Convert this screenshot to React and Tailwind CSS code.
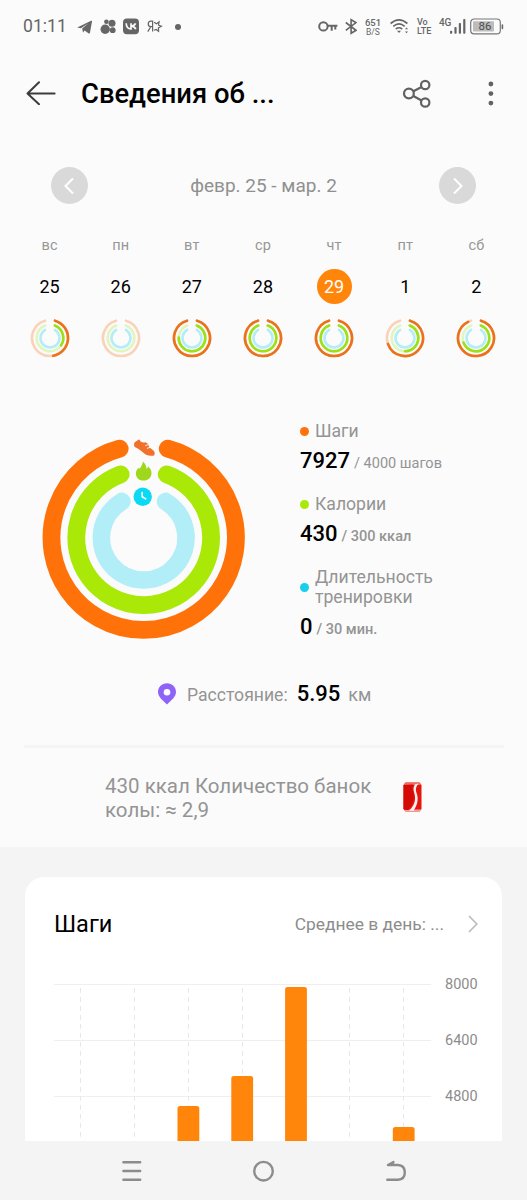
import React from 'react';

const days = [
  { name: 'вс', date: 25, steps: 170, kcal: 124 },
  { name: 'пн', date: 26, steps: 0, kcal: 0 },
  { name: 'вт', date: 27, steps: 360, kcal: 272 },
  { name: 'ср', date: 28, steps: 360, kcal: 360 },
  { name: 'чт', date: 29, steps: 360, kcal: 360, active: true },
  { name: 'пт', date: 1, steps: 251, kcal: 180 },
  { name: 'сб', date: 2, steps: 334, kcal: 250 },
];

const bars = [
  { x: 123.5, top: 122 },
  { x: 177.3, top: 92 },
  { x: 231.1, top: 3 },
  { x: 338.8, top: 143 },
];

// angles go clockwise from 12 o'clock
function point(c, r, deg) {
  const a = ((deg - 90) * Math.PI) / 180;
  return `${(c + r * Math.cos(a)).toFixed(2)} ${(c + r * Math.sin(a)).toFixed(2)}`;
}

function Arc({ c, r, gap, to = 360, color, width }) {
  const end = Math.min(to, 360 - gap);
  if (end <= gap) return null;
  const large = end - gap > 180 ? 1 : 0;
  return (
    <path
      d={`M${point(c, r, gap)}A${r} ${r} 0 ${large} 1 ${point(c, r, end)}`}
      fill="none"
      stroke={color}
      strokeWidth={width}
      strokeLinecap="round"
    />
  );
}

function SmallRings({ steps, kcal }) {
  return (
    <svg className="size-10" viewBox="0 0 40 40">
      <Arc c={20} r={18} gap={16} color="#fad2b9" width={2.6} />
      <Arc c={20} r={13.3} gap={21} color="#e2f5bd" width={2.6} />
      <Arc c={20} r={9.5} gap={31} color="#b3edf8" width={2.5} />
      <Arc c={20} r={18} gap={16} to={steps} color="#ea721c" width={2.6} />
      <Arc c={20} r={13.3} gap={21} to={kcal} color="#9fdf1a" width={2.6} />
    </svg>
  );
}

function BigRings() {
  return (
    <svg className="h-[204px] w-[204px] shrink-0" viewBox="0 0 204 204">
      <Arc c={101.7} r={92.2} gap={15.1} color="#ff720a" width={17.8} />
      <Arc c={101.7} r={67.4} gap={20} color="#aae808" width={17.8} />
      <Arc c={101.7} r={42.3} gap={31} color="#b2eef8" width={17.6} />
      {/* shoe */}
      <path
        d="M92 9.6L92.4 6.6L96.8 3.4Q98 3.4 98.5 5.4Q101 6.8 103.4 6.2L105.6 7.6L107.6 11.6L112 15Q113.4 16.6 112.2 19.4Q108 20.6 103.6 18.6L98.6 14.4Q96 12 92.8 10.9Z"
        fill="#f0712a"
      />
      <path d="M103.2 9.7L106.6 8.5M105 12.4L108.4 11.2" stroke="#fbfbfb" strokeWidth=".9" />
      {/* flame */}
      <path
        d="M101 25.6C103 27.8 104.5 29.6 104.4 32.8C105.6 32.2 105.7 30.9 106.3 30.4C108.3 32.2 109.6 34.4 109.5 37.3C109.4 41.6 106.2 44.6 101.8 44.6C97.3 44.6 94.2 41.9 93.9 37.9C93.7 34.8 95.4 33 97 31.5L97.5 33.1C98.9 31.1 100.4 29.1 101 25.6Z"
        fill="#9ed71b"
      />
      <circle cx="100.7" cy="60.8" r="9.2" fill="#0cd9f4" />
      <path d="M100.2 56.6V60.8L103.8 62.9" fill="none" stroke="#fff" strokeWidth="1.6" strokeLinecap="round" strokeLinejoin="round" />
    </svg>
  );
}

function StatusBar() {
  return (
    <div className="flex h-[54px] items-center pl-[23px] text-[#666]">
      <span className="w-[54px] text-[17.6px] leading-none">01:11</span>
      <svg className="h-5 w-4" viewBox="0 0 16 20" fill="currentColor">
        <path d="M.2 10.4L14.1 3.8Q15.3 3.3 15 4.6L12.9 15.9Q12.5 17 11.4 16.3L7.6 13.5L6 15.6L5.2 11.6L11.4 6.2L3.9 11.2Z" />
      </svg>
      <svg className="ml-[7px] h-5 w-4" viewBox="0 0 16 20" fill="currentColor">
        <circle cx="5.2" cy="12.2" r="4.7" />
        <circle cx="6.4" cy="4.8" r="2.3" />
        <circle cx="12" cy="6.2" r="3.5" />
        <circle cx="12.7" cy="13.2" r="2.9" />
      </svg>
      <svg className="ml-[7px] h-5 w-4" viewBox="0 0 16 20">
        <rect x="0" y="1.6" width="16" height="15.6" rx="4" fill="currentColor" />
        <path d="M3.2 6.3Q3.4 12 8 12V6.3M12.5 6.4Q11.5 8.9 8.4 9.1Q11.5 9.3 12.8 12.1" fill="none" stroke="#fbfbfb" strokeWidth="1.7" />
      </svg>
      <svg className="ml-2 h-5 w-4" viewBox="0 0 16 20" fill="none" stroke="currentColor" strokeWidth="1.2">
        <path d="M5.6 14.6V4.2H4Q1.2 4.3 1.2 7Q1.2 9.6 4 9.6H5.6M3.7 9.7L.8 14.6" />
        <path d="M7.1 5.2L9.4 6.8L12.1 4.9L11.5 8.2L14.4 9.2L11.4 10.9L11.6 14.3L9.1 12.4L6.9 13.3" />
      </svg>
      <span className="ml-3 size-1.5 rounded-full bg-[#666]" />

      <svg className="ml-[137px] h-5 w-5" viewBox="0 0 20 20" fill="none" stroke="currentColor" strokeWidth="2">
        <circle cx="5.4" cy="9.4" r="4.2" />
        <path d="M9.6 8.7H19.4M13.7 9V13.8M17.3 9V12.6" />
      </svg>
      <svg className="ml-[7px] h-5 w-3" viewBox="0 0 12 20" fill="none" stroke="currentColor" strokeWidth="1.6">
        <path d="M.8 5.5L11 13.3L6.1 16.3V2.7L11 5.6L.8 13.4" />
      </svg>
      <div className="ml-[7px] flex w-[18px] flex-col items-center font-medium">
        <span className="text-[9.5px] leading-[10px]">651</span>
        <span className="text-[8.5px] leading-[9px] font-normal">B/S</span>
      </div>
      <svg className="ml-2 h-5 w-5" viewBox="0 0 20 20" fill="none" stroke="currentColor" strokeWidth="1.7">
        <path d="M.6 6.5Q9 -.6 17.4 6.5M3.3 9.3Q9 4.6 14.7 9.3M5.8 12Q9 9.5 12.2 12" />
        <path d="M7 13.7H11L9 16Z" fill="currentColor" stroke="none" />
        <path d="M15 12.2L16.5 10.4L18 12.2ZM15 14.4L16.5 16.2L18 14.4Z" fill="currentColor" stroke="none" />
      </svg>
      <div className="ml-[7px] w-5 font-medium">
        <div className="text-[9px] leading-[9px]">Vo</div>
        <div className="text-[9px] leading-[9px]">LTE</div>
      </div>
      <span className="mb-2 ml-0.5 w-[11px] text-[10px] leading-none font-medium tracking-tight">4G</span>
      <svg className="h-5 w-4" viewBox="0 0 16 20" fill="currentColor">
        <rect x="0" y="13.8" width="2.2" height="3" rx=".8" />
        <rect x="4.4" y="10" width="2.2" height="6.8" rx=".8" />
        <rect x="8.8" y="6" width="2.2" height="10.8" rx=".8" />
        <rect x="13.2" y="2" width="2.2" height="14.8" rx=".8" />
      </svg>
      <svg className="ml-1 h-5 w-[34px]" viewBox="0 0 34 20">
        <rect x=".7" y="2" width="29.6" height="14.8" rx="3.4" fill="none" stroke="#777" strokeWidth="1.2" />
        <rect x="3" y="4.2" width="21" height="10.4" rx="1" fill="#bcbcbc" />
        <rect x="31.6" y="7.2" width="1.6" height="5" rx=".8" fill="#666" />
        <text x="15" y="13.4" textAnchor="middle" fontSize="11.5" fill="#4c4c4c">86</text>
      </svg>
    </div>
  );
}

function Header() {
  return (
    <header className="flex h-[78px] items-center pl-[26px] text-[#626262]">
      <svg className="h-6 w-[30px]" viewBox="0 0 30 24" fill="none" stroke="#3c3c3c" strokeWidth="2" strokeLinecap="round" strokeLinejoin="round">
        <path d="M28.6 12.5H1.5M13 1.2L1.5 12.5L13 23.2" />
      </svg>
      <h1 className="mt-0.5 ml-[25px] w-[321px] text-[27.4px] leading-[30px] font-medium text-black">Сведения об ...</h1>
      <svg className="h-[30px] w-[30px]" viewBox="0 0 30 30" fill="none" stroke="currentColor" strokeWidth="2.2">
        <circle cx="6.9" cy="15.5" r="4.9" />
        <circle cx="23.2" cy="7" r="4.2" />
        <circle cx="23.2" cy="24.5" r="4.2" />
        <path d="M11.4 13.3L19.5 9M11.4 18L19.5 22.5" />
      </svg>
      <svg className="mt-px ml-[54px] h-7 w-2" viewBox="0 0 8 28" fill="currentColor">
        <circle cx="4.9" cy="4" r="2.4" />
        <circle cx="4.9" cy="13.6" r="2.4" />
        <circle cx="4.9" cy="23.1" r="2.4" />
      </svg>
    </header>
  );
}

function RoundArrow({ d }) {
  return (
    <button className="flex size-[37px] items-center justify-center rounded-full bg-[#d9d9d9]">
      <svg className="size-5" viewBox="0 0 20 20" fill="none" stroke="#fff" strokeWidth="2">
        <path d={d} />
      </svg>
    </button>
  );
}

function Week() {
  return (
    <section className="mt-[35px]">
      <div className="flex items-center justify-between pr-[51px] pl-[51px]">
        <RoundArrow d="M13 2.5L5.5 10L13 17.5" />
        <span className="text-[19px] leading-6 text-[#909090]">февр. 25 - мар. 2</span>
        <RoundArrow d="M6 2.5L13.5 10L6 17.5" />
      </div>
      <div className="mt-8 grid grid-cols-7 pr-[15px] pl-[14px]">
        {days.map((d) => (
          <div key={d.date} className="flex flex-col items-center">
            <span className="text-[14.5px] leading-5 tracking-[0.2px] text-[#979797]">{d.name}</span>
            <span
              className={
                d.active
                  ? 'mt-[13px] flex size-[35px] items-center justify-center rounded-full bg-[#ff860a] text-[18px] text-white'
                  : 'mt-[13px] flex size-[35px] items-center justify-center text-[18px] text-black'
              }
            >
              {d.date}
            </span>
            <div className="mt-3.5">
              <SmallRings steps={d.steps} kcal={d.kcal} />
            </div>
          </div>
        ))}
      </div>
    </section>
  );
}

function Metric({ dot, label, value, goal, bold }) {
  return (
    <div>
      <div className="flex items-center">
        <span className={`size-[9px] shrink-0 rounded-full ${dot}`} />
        <span className="ml-1.5 text-[17.6px] leading-5 whitespace-pre-line text-[#949494]">{label}</span>
      </div>
      <div className="mt-1.5 flex items-baseline leading-7">
        <span className="text-[22px] font-medium text-black">{value}</span>
        <span className={`ml-1 text-[14.5px] text-[#949494] ${bold ? 'font-medium' : ''}`}>/ {goal}</span>
      </div>
    </div>
  );
}

function Can() {
  return (
    <svg className="mb-[3px] h-[30px] w-[19px]" viewBox="0 0 19 30">
      <path d="M2.5 .5H16.5L18.5 3V27L16.5 29.5H2.5L.5 27V3Z" fill="#e3170f" />
      <path d="M2 .8H16.8L18 3H1Z" fill="#ef6b62" />
      <path d="M1 27.4H18L16.8 29.4H2.2Z" fill="#f3a39c" />
      <path d="M.5 3L10 2.5Q8.5 7 10.4 11Q12 18 5.6 28H2L.5 27Z" fill="#d40a06" />
      <path d="M12.2 2.2Q9.6 5.4 11 10C13.8 18.4 11 23.5 6.2 28.8H10.6C14.6 23 16 16.5 13.2 10Q12 5.6 15.6 1.6Z" fill="#fff0ed" />
    </svg>
  );
}

function StepsCard() {
  return (
    <section className="h-[294px] bg-[#f4f4f4] pt-[30px] pr-[25px] pl-[25px]">
      <div className="h-[264px] rounded-t-[19px] bg-white">
        <div className="flex h-[94px] items-center pr-[23px] pl-[29px]">
          <h2 className="flex-1 text-[23.5px] leading-7 text-black">Шаги</h2>
          <span className="text-[17.4px] leading-6 text-[#8c8c8c]">Среднее в день: ...</span>
          <svg className="ml-[23px] h-5 w-3" viewBox="0 0 12 20" fill="none" stroke="#bdbdbd" strokeWidth="1.7">
            <path d="M2 2L9.8 10L2 18" />
          </svg>
        </div>
        <div className="flex pl-[29px]">
          <svg className="mt-[13px] h-[157px] w-[378px]" viewBox="0 0 378 157">
            <path d="M0 .5H377M0 56.5H377M0 112.5H377" stroke="#efefef" />
            <path
              d="M26.5 4V158M80.5 4V158M134.5 4V158M188.5 4V158M242.5 4V158M295.5 4V158M349.5 4V158"
              stroke="#e7e7e7"
              strokeDasharray="4.7 4.3"
            />
            {bars.map((b) => (
              <path
                key={b.x}
                d={`M${b.x} 158V${b.top + 2.5}q0 -2.5 2.5 -2.5h16.8q2.5 0 2.5 2.5V158Z`}
                fill="#ff860a"
              />
            ))}
          </svg>
          <div className="ml-[13px] text-[14.5px] text-[#8c8c8c]">
            <div className="flex h-[28px] items-center">8000</div>
            <div className="mt-7 flex h-[28px] items-center">6400</div>
            <div className="mt-7 flex h-[28px] items-center">4800</div>
          </div>
        </div>
      </div>
    </section>
  );
}

function NavBar() {
  return (
    <nav className="flex h-[59px] items-center bg-[#f4f4f4] pl-[121px] text-[#8c8c8c]">
      <svg className="h-6 w-[22px]" viewBox="0 0 22 24" fill="none" stroke="currentColor" strokeWidth="2.4" strokeLinecap="round">
        <path d="M2.4 3.2H19.2M2.4 12H19.2M2.4 20.8H19.2" />
      </svg>
      <svg className="ml-[109px] h-6 w-6" viewBox="0 0 24 24" fill="none" stroke="currentColor" strokeWidth="2.4">
        <circle cx="11.5" cy="12.2" r="9.3" />
      </svg>
      <svg className="ml-[109px] h-6 w-6" viewBox="0 0 24 24" fill="none" stroke="currentColor" strokeWidth="2.4" strokeLinecap="round" strokeLinejoin="round">
        <path d="M2.3 20.8H13Q19.8 20.4 19.8 13.6Q19.8 6.3 13 6H3L8.5 3" />
        <path d="M1.6 6.5L9 1.9V6.5Z" fill="currentColor" stroke="none" />
      </svg>
    </nav>
  );
}

export default function App() {
  return (
    <div className="h-[1200px] w-[527px] overflow-hidden bg-[#fbfbfb] font-['Roboto','Liberation_Sans',sans-serif]">
      <div className="h-[847px]">
        <StatusBar />
        <Header />
        <Week />

        <section className="mt-[63px] flex pl-[42px]">
          <div className="mt-[15px]">
            <BigRings />
          </div>
          <div className="ml-[54px]">
            <Metric dot="bg-[#ff720a]" label="Шаги" value="7927" goal="4000 шагов" />
            <div className="mt-4">
              <Metric dot="bg-[#aae808]" label="Калории" value="430" goal="300 ккал" bold />
            </div>
            <div className="mt-4">
              <Metric dot="bg-[#17cfea]" label={'Длительность\nтренировки'} value="0" goal="30 мин." bold />
            </div>
          </div>
        </section>

        <div className="mt-9 flex h-7 items-center pl-[157px]">
          <svg className="h-[22px] w-5" viewBox="0 0 20 22">
            <path d="M10 .3C15 .3 19 4 19 9C19 14 14 17.5 10 21.5C6 17.5 1 14 1 9C1 4 5 .3 10 .3Z" fill="#8f63f8" />
            <circle cx="10" cy="9.2" r="3.3" fill="#fff" />
          </svg>
          <div className="ml-2.5 flex items-baseline">
            <span className="text-[17.6px] text-[#949494]">Расстояние:</span>
            <span className="ml-[9px] text-[22px] leading-7 font-medium text-black">5.95</span>
            <span className="ml-2 text-[18px] text-[#949494]">км</span>
          </div>
        </div>

        <div className="mt-[37px] mr-[23px] ml-[24px] h-[3px] bg-[#f4f4f4]" />

        <div className="mt-[27px] flex items-center pl-[105px]">
          <p className="w-[298px] text-[20.5px] leading-[23.5px] text-[#949494]">
            430 ккал Количество банок
            <br />
            колы: ≈ 2,9
          </p>
          <Can />
        </div>
      </div>
      <StepsCard />
      <NavBar />
    </div>
  );
}
